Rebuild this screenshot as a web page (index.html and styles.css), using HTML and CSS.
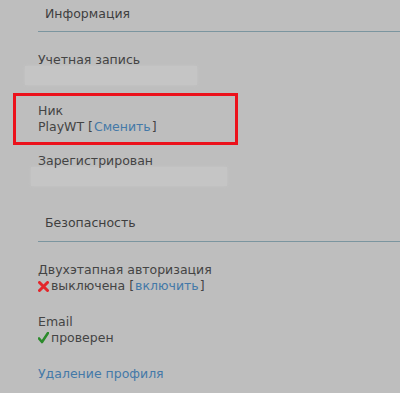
FILE: index.html
```html
<!DOCTYPE html>
<html>
  <head>
    <meta charset="UTF-8">
    <meta name="viewport" content="width=device-width, initial-scale=1.0">
    <title>Профиль</title>
    <link rel="stylesheet" href="styles.css">
  </head>
  <body>
    <div class="page">
      <h2 class="section-title">Информация</h2>

      <div class="field">
        <div class="field-label">Учетная запись</div>
        <div class="redacted"></div>
      </div>

      <div class="field highlight">
        <div class="field-label">Ник</div>
        <div class="field-value">PlayWT [<a href="#">Сменить</a>]</div>
      </div>

      <div class="field field-after-box">
        <div class="field-label">Зарегистрирован</div>
        <div class="redacted redacted-wide"></div>
      </div>

      <h2 class="section-title section-gap">Безопасность</h2>

      <div class="field">
        <div class="field-label">Двухэтапная авторизация</div>
        <div class="field-value">
          <svg class="icon" width="11" height="11" viewBox="0 0 11 11">
            <path d="M1.5 1.5 L9.5 9.5 M9.5 1.5 L1.5 9.5" stroke="#e3262b" stroke-width="3" stroke-linecap="round"/>
          </svg>выключена [<a href="#">включить</a>]
        </div>
      </div>

      <div class="field">
        <div class="field-label">Email</div>
        <div class="field-value">
          <svg class="icon" width="11" height="12" viewBox="0 0 11 12">
            <path d="M1 6.5 L4 10 L10 1" fill="none" stroke="#2b8a2b" stroke-width="2.6" stroke-linecap="round" stroke-linejoin="round"/>
          </svg>проверен
        </div>
      </div>

      <div class="field">
        <a href="#" class="delete-link">Удаление профиля</a>
      </div>
    </div>
  </body>
</html>
```

FILE: styles.css
```css
* {
  box-sizing: border-box;
  margin: 0;
  padding: 0;
}

body {
  font-family: "DejaVu Sans", sans-serif;
  font-size: 12.5px;
  line-height: 16px;
  color: #444;
  background-color: #bebebe;
}

a {
  color: #4479a8;
  text-decoration: none;
}

.page {
  padding-left: 38px;
}

.section-title {
  font-size: 12.5px;
  font-weight: normal;
  line-height: 16px;
  color: #3f3f3f;
  padding: 6px 0 9px 7px;
  border-bottom: 1px solid #7b959f;
}

.section-gap {
  margin-top: 23px;
  padding-bottom: 10px;
}

.field {
  margin-top: 20px;
}

.field-value {
  display: flex;
  align-items: center;
}

.field-value a {
  margin: 0 1px;
}

.icon {
  margin-right: 2px;
}

.redacted {
  width: 172px;
  height: 19px;
  margin: -2px 0 0 -13px;
  background-color: #c5c5c5;
  box-shadow: 0 0 3px #c5c5c5;
}

.redacted-wide {
  width: 196px;
  margin-left: -7px;
}

.highlight {
  width: 225px;
  margin: 8px 0 0 -25px;
  padding: 7px 0 7px 22px;
  border: 3px solid #ec111b;
}

.field-after-box {
  margin-top: 8px;
}

.delete-link {
  display: block;
}
```
